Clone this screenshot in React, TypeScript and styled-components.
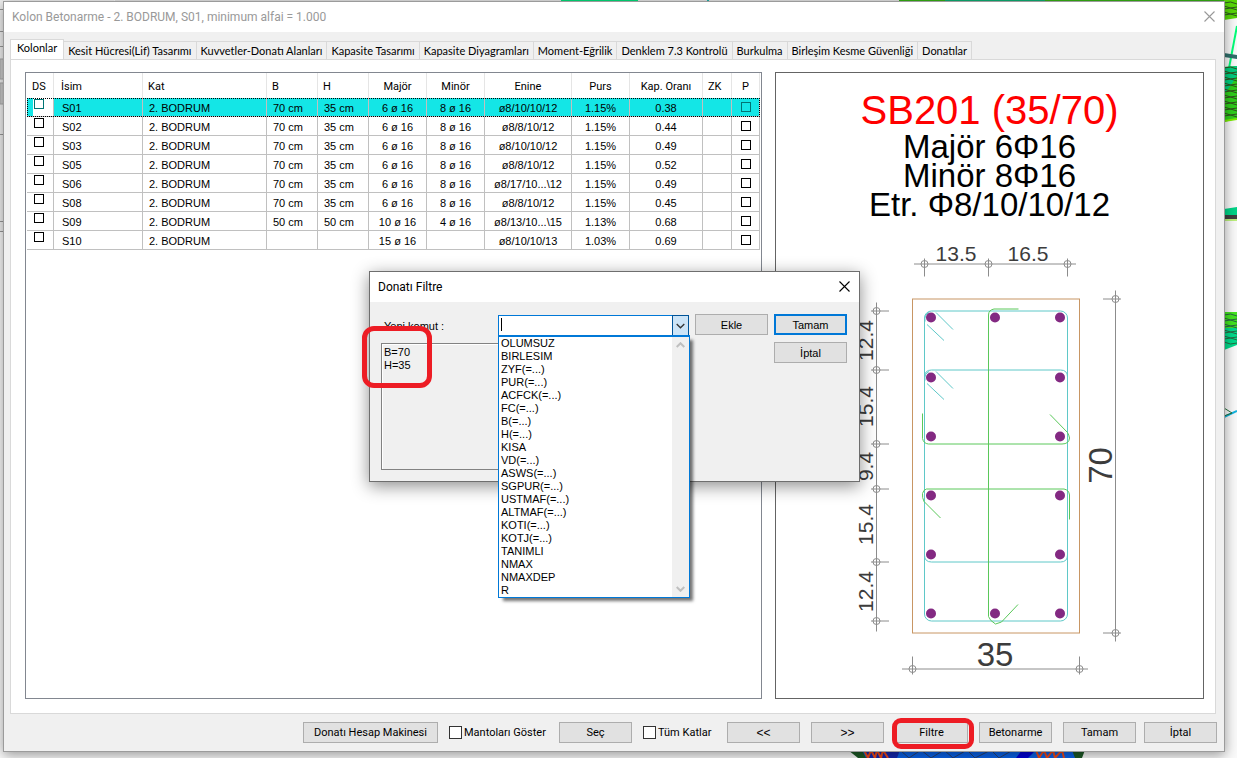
import React from "react";
import styled, { createGlobalStyle, css } from "styled-components";

const UI = `Roboto, "Noto Sans", sans-serif`;
const SANS = `"Liberation Sans", Arial, sans-serif`;
const ACCENT = "#0078d7";

const GlobalStyle = createGlobalStyle`
  *, *::before, *::after { box-sizing: border-box; }
  body { margin: 0; background: #fafafa; font-family: ${UI}; font-size: 11px; color: #000; }
  button, input, select, textarea { font: inherit; color: inherit; margin: 0; }
`;

const Desktop = styled.div`
  position: relative;
  min-height: 100vh;
  padding: 1px 12px 6px 3px;
  display: flex;
  overflow: hidden;
`;

const Backdrop = styled.svg`
  position: absolute;
  inset: 0;
  width: 100%;
  height: 100%;
`;

const MainWindow = styled.section`
  position: relative;
  flex: 1;
  min-width: 0;
  display: flex;
  flex-direction: column;
  background: #f0f0f0;
  border: 1px solid #9b9b9b;
  box-shadow: 0 3px 12px rgba(0, 0, 0, 0.4);
`;

const TitleBar = styled.header<{ $inactive?: boolean }>`
  display: flex;
  align-items: center;
  justify-content: space-between;
  height: 30px;
  padding: 0 8px;
  background: #fff;
  color: ${(p) => (p.$inactive ? "#999" : "#000")};
`;

const WindowTitle = styled.h1`
  margin: 0;
  font-size: 12px;
  line-height: 16px;
  font-weight: 400;
`;

const CloseButton = styled.button`
  display: flex;
  padding: 0 1px 2px 0;
  border: 0;
  background: none;
`;

const Body = styled.main`
  flex: 1;
  display: flex;
  flex-direction: column;
  padding: 7px 8px 0 6px;
`;

const Tabs = styled.nav`
  display: flex;
  align-items: flex-end;
  height: 21px;
  margin-bottom: -1px;
  font-family: Lato, ${UI};
`;

const Tab = styled.button<{ $active?: boolean }>`
  height: 19px;
  padding: 0 4px;
  border: 1px solid #d9d9d9;
  border-left: 0;
  background: #f0f0f0;
  line-height: 16px;
  white-space: nowrap;
  ${(p) =>
    p.$active &&
    css`
      height: 21px;
      padding: 0 6px 3px;
      border-left: 1px solid #d9d9d9;
      border-bottom-color: #fff;
      background: #fff;
    `}
`;

const TabPanel = styled.div`
  flex: 1;
  display: grid;
  grid-template-columns: minmax(0, 737fr) minmax(0, 429fr);
  gap: 13px;
  padding: 12px 11px 14px 14px;
  border: 1px solid #d9d9d9;
  background: #fff;
`;

const ListView = styled.div`
  padding-left: 1px;
  border: 1px solid #828790;
  overflow: hidden;
`;

const Table = styled.table`
  width: 733px;
  table-layout: fixed;
  border-collapse: separate;
  border-spacing: 0;
  font-family: ${SANS};
`;

const HeadCell = styled.th<{ $center?: boolean; $lead?: boolean }>`
  height: 25px;
  padding: 2px 5px 0 ${(p) => (p.$lead ? 7 : 5)}px;
  border-right: 1px solid #e5e5e5;
  font-family: ${UI};
  font-weight: 400;
  line-height: 16px;
  text-align: ${(p) => (p.$center ? "center" : "left")};
`;

const Row = styled.tr<{ $selected?: boolean }>`
  ${(p) =>
    p.$selected &&
    css`
      background: #14e6e6;
      outline: 1px dotted #000;
      outline-offset: -1px;
    `}
`;

const Cell = styled.td<{ $center?: boolean; $lead?: boolean }>`
  height: 19px;
  padding: 2px 6px 0 ${(p) => (p.$lead ? 8 : 6)}px;
  border-right: 1px solid #c0c0c0;
  border-bottom: 1px solid #c0c0c0;
  line-height: 16px;
  white-space: nowrap;
  text-align: ${(p) => (p.$center ? "center" : "left")};
`;

const CheckCell = styled(Cell)<{ $selected?: boolean; $top?: boolean }>`
  padding: ${(p) => (p.$top ? "1px 7px 0" : "4px 9px 0")};
  vertical-align: top;
  line-height: 10px;
  ${(p) => p.$selected && p.$top && "background: linear-gradient(90deg, #14e6e6 6px, #fff 6px);"}
`;

const Tick = styled.input<{ $size: number; $color?: string; $fill?: string }>`
  appearance: none;
  display: block;
  width: ${(p) => p.$size}px;
  height: ${(p) => p.$size}px;
  border: 1px solid ${(p) => p.$color ?? "#000"};
  background: ${(p) => p.$fill ?? "transparent"};
`;

const Preview = styled.figure`
  display: flex;
  flex-direction: column;
  margin: 0;
  padding-top: 15px;
  border: 1px solid #646464;
  font-family: ${SANS};
  text-align: center;
  white-space: nowrap;
`;

const SectionName = styled.h2`
  margin: 0;
  color: #f00;
  font-size: 40px;
  line-height: 44px;
  font-weight: 400;
`;

const SectionInfo = styled.p`
  margin: 0;
  font-size: 33px;
  line-height: 29px;
`;

const Drawing = styled.svg`
  flex: 1;
  width: 100%;
  min-height: 0;
  font-family: ${SANS};
`;

const Footer = styled.footer`
  display: flex;
  justify-content: flex-end;
  gap: 11px;
  height: 37px;
  padding: 8px 7px;
`;

const ButtonPair = styled.div`
  display: flex;
  gap: 8px;
`;

const Button = styled.button<{ $wide?: boolean; $primary?: boolean }>`
  width: ${(p) => (p.$wide ? 135 : 73)}px;
  height: 21px;
  padding: 0;
  border: ${(p) => (p.$primary ? `2px solid ${ACCENT}` : "1px solid #adadad")};
  background: #e1e1e1;
  line-height: 16px;
  white-space: nowrap;
`;

const StepButton = styled(Button)`
  font-family: ${SANS};
  font-size: 12px;
`;

const CheckLabel = styled.label<{ $width: number }>`
  display: flex;
  align-items: center;
  gap: 2px;
  width: ${(p) => p.$width}px;
  height: 21px;
  white-space: nowrap;
`;

const Highlighted = styled.div`
  position: relative;
  height: 21px;
  &::after {
    content: "";
    position: absolute;
    inset: -4px -6px -6px -3px;
    border: 5px solid #ed1c24;
    border-radius: 9px;
    pointer-events: none;
  }
`;

const Dialog = styled.section`
  position: absolute;
  left: 369px;
  top: 271px;
  width: 491px;
  border: 1px solid #6e6e6e;
  background: #f0f0f0;
  box-shadow: 0 4px 16px rgba(0, 0, 0, 0.45);
`;

const Form = styled.form`
  display: grid;
  grid-template-columns: 308px 73px 73px;
  align-items: start;
  gap: 6px;
  padding: 12px 11px 11px;
  font-family: ${SANS};
`;

const Field = styled.div`
  display: flex;
  align-items: center;
  padding-top: 1px;
`;

const FieldLabel = styled.label`
  width: 117px;
  padding-left: 3px;
`;

const Combo = styled.div`
  position: relative;
  display: flex;
  width: 191px;
  height: 21px;
  border: 1px solid ${ACCENT};
  background: #fff;
`;

const ComboInput = styled.input`
  flex: 1;
  min-width: 0;
  padding: 0 2px;
  border: 0;
  outline: 0;
  background: none;
`;

const Caret = styled.span`
  position: absolute;
  left: 2px;
  top: 2px;
  width: 1px;
  height: 13px;
  background: #000;
`;

const ComboArrow = styled.button`
  display: flex;
  align-items: center;
  justify-content: center;
  width: 17px;
  margin: -1px;
  padding: 0;
  border: 1px solid #005499;
  background: #cce4f7;
`;

const DropDown = styled.div`
  position: absolute;
  left: -1px;
  top: 19px;
  z-index: 2;
  display: flex;
  width: 192px;
  height: 263px;
  border: 1px solid ${ACCENT};
  border-top-width: 2px;
  background: #fff;
  box-shadow: 4px 4px 3px -1px rgba(0, 0, 0, 0.55);
`;

const Options = styled.select`
  flex: 1;
  min-width: 0;
  height: 260px;
  padding: 0;
  border: 0;
  outline: 0;
  background: #fff;
  overflow: hidden;
  option {
    min-height: 13px;
    height: 13px;
    padding: 0 2px;
    line-height: 13px;
  }
`;

const ScrollTrack = styled.div`
  display: flex;
  flex-direction: column;
  align-items: center;
  justify-content: space-between;
  width: 17px;
  padding: 5px 0;
  background: #f0f0f0;
`;

const Commands = styled.textarea`
  height: 127px;
  margin-top: 1px;
  padding: 2px;
  border: 1px solid #828282;
  outline: 0;
  background: #f0f0f0;
  box-shadow: inset 1px 1px #fff;
  line-height: 13px;
  resize: none;
`;

const ListHighlight = styled.div`
  position: absolute;
  left: 362px;
  top: 326px;
  width: 70px;
  height: 62px;
  border: 5px solid #ed1c24;
  border-radius: 12px;
  pointer-events: none;
`;

const TABS = [
  "Kolonlar",
  "Kesit Hücresi(Lif) Tasarımı",
  "Kuvvetler-Donatı Alanları",
  "Kapasite Tasarımı",
  "Kapasite Diyagramları",
  "Moment-Eğrilik",
  "Denklem 7.3 Kontrolü",
  "Burkulma",
  "Birleşim Kesme Güvenliği",
  "Donatılar",
];

const COLUMNS = [
  { name: "DS", width: 27 },
  { name: "İsim", width: 89, lead: true },
  { name: "Kat", width: 124 },
  { name: "B", width: 51 },
  { name: "H", width: 51 },
  { name: "Majör", width: 58, center: true },
  { name: "Minör", width: 58, center: true },
  { name: "Enine", width: 87, center: true },
  { name: "Purs", width: 58, center: true },
  { name: "Kap. Oranı", width: 73, center: true },
  { name: "ZK", width: 29 },
  { name: "P", width: 28, center: true },
];

const ROWS = [
  ["S01", "2. BODRUM", "70 cm", "35 cm", "6 ø 16", "8 ø 16", "ø8/10/10/12", "1.15%", "0.38", ""],
  ["S02", "2. BODRUM", "70 cm", "35 cm", "6 ø 16", "8 ø 16", "ø8/8/10/12", "1.15%", "0.44", ""],
  ["S03", "2. BODRUM", "70 cm", "35 cm", "6 ø 16", "8 ø 16", "ø8/10/10/12", "1.15%", "0.49", ""],
  ["S05", "2. BODRUM", "70 cm", "35 cm", "6 ø 16", "8 ø 16", "ø8/8/10/12", "1.15%", "0.52", ""],
  ["S06", "2. BODRUM", "70 cm", "35 cm", "6 ø 16", "8 ø 16", "ø8/17/10...\\12", "1.15%", "0.49", ""],
  ["S08", "2. BODRUM", "70 cm", "35 cm", "6 ø 16", "8 ø 16", "ø8/8/10/12", "1.15%", "0.45", ""],
  ["S09", "2. BODRUM", "50 cm", "50 cm", "10 ø 16", "4 ø 16", "ø8/13/10...\\15", "1.13%", "0.68", ""],
  ["S10", "2. BODRUM", "", "", "15 ø 16", "", "ø8/10/10/13", "1.03%", "0.69", ""],
];

const OPTIONS = [
  "OLUMSUZ", "BIRLESIM", "ZYF(=...)", "PUR(=...)", "ACFCK(=...)", "FC(=...)", "B(=...)",
  "H(=...)", "KISA", "VD(=...)", "ASWS(=...)", "SGPUR(=...)", "USTMAF(=...)", "ALTMAF(=...)",
  "KOTI(=...)", "KOTJ(=...)", "TANIMLI", "NMAX", "NMAXDEP", "R",
];

const BARS = [
  [931, 318], [995, 318], [1060, 318],
  [931, 378], [1060, 378],
  [931, 437], [1060, 437],
  [931, 496], [1060, 496],
  [931, 555], [1060, 555],
  [931, 614], [995, 614], [1060, 614],
];

const NODES = [
  [924.5, 264.5], [988.5, 264.5], [1067.5, 264.5],
  [1115.5, 299.5], [1115.5, 633.5],
  [912.5, 669.5], [1079.5, 669.5],
  ...[311.5, 370.5, 444.5, 489.5, 562.5, 621.5].map((y) => [876.5, y]),
];

const SIDE_DIMENSIONS: [string, number][] = [
  ["12.4", 341], ["15.4", 407], ["9.4", 467], ["15.4", 525], ["12.4", 592],
];

function Cross({ color }: { color: string }) {
  return (
    <svg width="11" height="11" viewBox="0 0 11 11" stroke={color} strokeWidth="1.1">
      <path d="M.5 .5 10.5 10.5M10.5 .5 .5 10.5" />
    </svg>
  );
}

function Chevron({ up, color, weight = 1.3 }: { up?: boolean; color: string; weight?: number }) {
  return (
    <svg width="9" height="6" viewBox="0 0 9 6" fill="none" stroke={color} strokeWidth={weight}>
      <path d={up ? "M.7 5 4.5 1.2 8.3 5" : "M.7 1 4.5 4.8 8.3 1"} />
    </svg>
  );
}

const zigzag = (x: number, y: number, width: number, height: number) => {
  let d = "";
  for (let i = 0; i < height; i += 3) d += `M${x} ${y + i}l${width / 2} ${i % 2 ? 2 : -1}l${width / 2} ${i % 2 ? -1 : 2}`;
  return d;
};

function ModelBackdrop() {
  return (
    <Backdrop viewBox="0 0 1237 758" preserveAspectRatio="none" aria-hidden="true">
      <rect width="114" height="232" fill="#f0f0f0" />
      <path d="M0 9.5H4M0 31.5H4M0 46.5H4M0 134.5H4M0 221.5H4M0 231.5H4" stroke="#999" />
      <path d="M0 59h4v20H0zM0 83h4v21H0z" fill="#ccc" stroke="#aaa" />
      <path d="M115 0h446v1H115zM637 0h262v1H637z" fill="#e4e4e4" />
      <path d="M561 0h77v2h-77z" fill="#00e07a" />
      <path d="M707 0h2v2h-2z" fill="#20b2aa" />
      <path d="M899 0h338v2H899z" fill="#35b012" />
      <path d="M945 0h100v2H945z" fill="#0cae72" />
      <g>
        <path d="M1224 0h13v18l-13 2z" fill="#58d808" />
        <path d={zigzag(1224, 3, 13, 15)} stroke="#2c5a1c" fill="none" />
        <path d="M1237 26 1229 68" stroke="#00ff78" strokeWidth="2" />
        <path d="M1224 53l13 2v4l-13-2z" fill="#2f6f6b" />
        <path d="M1224 67l13-1v53l-13 3z" fill="#2fd01c" />
        <path d="M1224 67l13-1v10l-8 12-5 6z" fill="#00cf80" />
        <path d={zigzag(1224, 68, 13, 50)} stroke="#31521f" fill="none" />
        <path d="M1224 121l13-2" stroke="#7cf000" strokeWidth="2" />
        <path d="M1224 209l13-2v8l-13 1z" fill="#00d487" />
        <path d="M1224 215h13v4h-13z" fill="#404040" />
        <path d="M1224 220h13" stroke="#80e800" />
        <path d="M1224 312h13v16h-13z" fill="#44e620" />
        <path d="M1224 328h13v17l-13 5z" fill="#00dc8c" />
        <path d={zigzag(1224, 315, 13, 30)} stroke="#286844" fill="none" />
        <path d="M1224 417l13-6" stroke="#12b4e0" strokeWidth="2" />
        <path d="M1224 408l8 5-8 3" stroke="#26703c" fill="none" />
      </g>
      <path d="M848 750h237l-6 8H862z" fill="#0a62e8" />
      <path d="M848 750h14l4 8h-8zM1072 750h13l-3 8h-7z" fill="#1c5a26" />
      <path d="M866 750h34l-3 8h-31z" fill="#1428b0" />
      <path d="M1022 750h14l-8 8h-12z" fill="#0000d8" />
      <path
        d="M864 750l4 8 3-8 4 8 2-8 4 8 2-8 5 8M1036 750l3 8 5-8 3 8 6-8 2 8 7-8 2 8"
        stroke="#f04a18"
        strokeWidth="2"
        fill="none"
      />
      <path
        d="M900 750l9 8 12-8 10 8 13-8 9 8 14-8 8 8 16-8 8 8 14-8"
        stroke="#28406c"
        fill="none"
      />
    </Backdrop>
  );
}

function SectionDrawing() {
  return (
    <Drawing viewBox="776 220 427 478" role="img" aria-label="Kolon kesiti">
      <g fill="none" stroke="#8c8c8c">
        <path d="M914 264.5H1076M924.5 259V277M988.5 259V277M1067.5 259V277" />
        <path d="M1115.5 291V642M1103 299.5H1121M1103 633.5H1121" />
        <path d="M902 669.5H1088M912.5 657V675M1079.5 657V675" />
        <path d="M876.5 303V632M871 311.5H889M871 370.5H889M871 444.5H889M871 489.5H889M871 562.5H889M871 621.5H889" />
        {NODES.map(([x, y]) => (
          <circle key={`${x}-${y}`} cx={x} cy={y} r="3.5" />
        ))}
      </g>
      <rect x="912.5" y="299.5" width="167" height="334" fill="none" stroke="#c89664" />
      <g fill="none" stroke="#5fc8c8">
        <rect x="924.5" y="311.5" width="143" height="310" rx="7" />
        <path d="M924.5 377.5q0-7 7-7H1060.5q7 0 7 7M924.5 555.5q0 7 7 7H1060.5q7 0 7-7" />
        <path d="M936 313 953 330M927 325 944 341M936 372 953 389M927 384 944 400" />
        <path d="M925 322q-1-7 4-9M925 381q-1-7 4-9" />
      </g>
      <g fill="none" stroke="#5ac85a">
        <path d="M1018.5 309.5H994q-5.500 1-5.500 6V617q1 4 7 7.500l6-2L1018 605" />
        <path d="M922.5 414V439q1 5 6 5.500H1062q7 0 7.500-6-.5-3-2-5.500L1050 415" />
        <path d="M940.5 518.5 924 502q-2-4-1.500-8 1-4 4-4.500H1064q5 1 5.500 6V520" />
      </g>
      <g fill="#832982">
        {BARS.map(([x, y]) => (
          <circle key={`${x}-${y}`} cx={x} cy={y} r="5" />
        ))}
      </g>
      <g fill="#3c3c3c" fontSize="21" textAnchor="middle">
        <text x="956" y="261">13.5</text>
        <text x="1028" y="261">16.5</text>
        {SIDE_DIMENSIONS.map(([label, y]) => (
          <text key={y} transform={`translate(873 ${y}) rotate(-90)`}>
            {label}
          </text>
        ))}
        <g fontSize="33">
          <text x="995" y="666">35</text>
          <text transform="translate(1112 466) rotate(-90)">70</text>
        </g>
      </g>
    </Drawing>
  );
}

function ColumnTable() {
  return (
    <ListView>
      <Table>
        <colgroup>
          {COLUMNS.map((c) => (
            <col key={c.name} width={c.width} />
          ))}
        </colgroup>
        <thead>
          <tr>
            {COLUMNS.map((c) => (
              <HeadCell key={c.name} $center={c.center} $lead={c.lead}>
                {c.name}
              </HeadCell>
            ))}
          </tr>
        </thead>
        <tbody>
          {ROWS.map((row, i) => {
            const selected = i === 0;
            const color = selected ? "#007474" : "#000";
            return (
              <Row key={row[0]} $selected={selected}>
                <CheckCell $top $selected={selected}>
                  <Tick type="checkbox" $size={10} $color={color} aria-label={`DS ${row[0]}`} />
                </CheckCell>
                {row.map((value, c) => (
                  <Cell key={c} $center={c > 3} $lead={c === 0}>
                    {value}
                  </Cell>
                ))}
                <CheckCell>
                  <Tick type="checkbox" $size={10} $color={color} aria-label={`P ${row[0]}`} />
                </CheckCell>
              </Row>
            );
          })}
        </tbody>
      </Table>
    </ListView>
  );
}

function FilterDialog() {
  return (
    <Dialog role="dialog" aria-labelledby="filter-title">
      <TitleBar>
        <WindowTitle as="h2" id="filter-title">
          Donatı Filtre
        </WindowTitle>
        <CloseButton type="button" aria-label="Kapat">
          <Cross color="#000" />
        </CloseButton>
      </TitleBar>
      <Form onSubmit={(e) => e.preventDefault()}>
        <Field>
          <FieldLabel htmlFor="command">Yeni komut :</FieldLabel>
          <Combo>
            <ComboInput id="command" type="text" autoComplete="off" />
            <Caret />
            <ComboArrow type="button" aria-label="Komut listesi">
              <Chevron color="#333" />
            </ComboArrow>
            <DropDown>
              <Options size={20} aria-label="Komutlar">
                {OPTIONS.map((o) => (
                  <option key={o}>{o}</option>
                ))}
              </Options>
              <ScrollTrack>
                <Chevron up color="#bfbfbf" weight={2} />
                <Chevron color="#bfbfbf" weight={2} />
              </ScrollTrack>
            </DropDown>
          </Combo>
        </Field>
        <Button type="button">Ekle</Button>
        <Button $primary>Tamam</Button>
        <Commands readOnly aria-label="Komut filtreleri" defaultValue={"B=70\nH=35"} />
        <span />
        <Button type="button">İptal</Button>
      </Form>
    </Dialog>
  );
}

export default function App() {
  return (
    <Desktop>
      <GlobalStyle />
      <ModelBackdrop />
      <MainWindow>
        <TitleBar $inactive>
          <WindowTitle>Kolon Betonarme - 2. BODRUM, S01, minimum alfai = 1.000</WindowTitle>
          <CloseButton aria-label="Pencereyi kapat">
            <Cross color="#999" />
          </CloseButton>
        </TitleBar>
        <Body>
          <Tabs>
            {TABS.map((t, i) => (
              <Tab key={t} $active={i === 0}>
                {t}
              </Tab>
            ))}
          </Tabs>
          <TabPanel>
            <ColumnTable />
            <Preview>
              <SectionName>SB201 (35/70)</SectionName>
              <SectionInfo>Majör 6Φ16</SectionInfo>
              <SectionInfo>Minör 8Φ16</SectionInfo>
              <SectionInfo>Etr. Φ8/10/10/12</SectionInfo>
              <SectionDrawing />
            </Preview>
          </TabPanel>
        </Body>
        <Footer>
          <Button $wide>Donatı Hesap Makinesi</Button>
          <CheckLabel $width={99}>
            <Tick type="checkbox" $size={13} $color="#333" $fill="#fff" />
            Mantoları Göster
          </CheckLabel>
          <Button>Seç</Button>
          <CheckLabel $width={73}>
            <Tick type="checkbox" $size={13} $color="#333" $fill="#fff" />
            Tüm Katlar
          </CheckLabel>
          <StepButton>&lt;&lt;</StepButton>
          <StepButton>&gt;&gt;</StepButton>
          <Highlighted>
            <Button>Filtre</Button>
          </Highlighted>
          <Button>Betonarme</Button>
          <ButtonPair>
            <Button>Tamam</Button>
            <Button>İptal</Button>
          </ButtonPair>
        </Footer>
      </MainWindow>
      <FilterDialog />
      <ListHighlight />
    </Desktop>
  );
}
